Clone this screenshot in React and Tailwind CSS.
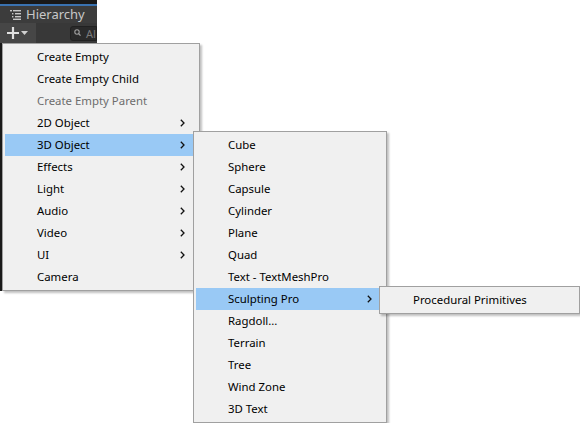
const menu1 = [
  { label: "Create Empty" },
  { label: "Create Empty Child" },
  { label: "Create Empty Parent", disabled: true },
  { label: "2D Object", sub: true },
  { label: "3D Object", sub: true, active: true },
  { label: "Effects", sub: true },
  { label: "Light", sub: true },
  { label: "Audio", sub: true },
  { label: "Video", sub: true },
  { label: "UI", sub: true },
  { label: "Camera" },
]

const menu2 = [
  { label: "Cube" },
  { label: "Sphere" },
  { label: "Capsule" },
  { label: "Cylinder" },
  { label: "Plane" },
  { label: "Quad" },
  { label: "Text - TextMeshPro" },
  { label: "Sculpting Pro", sub: true, active: true },
  { label: "Ragdoll..." },
  { label: "Terrain" },
  { label: "Tree" },
  { label: "Wind Zone" },
  { label: "3D Text" },
]

function Chevron() {
  return (
    <svg width="5" height="8" viewBox="0 0 5 8" className="shrink-0">
      <path d="M0.8 0.8 L4 4 L0.8 7.2" fill="none" stroke="#111" strokeWidth="1.3" />
    </svg>
  )
}

function Item({ label, sub, active, disabled }) {
  return (
    <div
      className={`flex h-[22px] items-center pl-8 pr-3 ${active ? "bg-[#99c9f5]" : ""} ${disabled ? "text-[#6d6d6d]" : "text-black"}`}
    >
      <span className="flex-1 whitespace-nowrap">{label}</span>
      {sub && <Chevron />}
    </div>
  )
}

function Menu({ items, className }) {
  return (
    <div
      className={`absolute border border-[#a0a0a0] bg-[#f0f0f0] p-[2px] shadow-[2px_2px_2px_rgba(0,0,0,0.25)] ${className}`}
    >
      {items.map((it) => (
        <Item key={it.label} {...it} />
      ))}
    </div>
  )
}

export default function App() {
  return (
    <div className="relative h-[423px] w-[580px] overflow-hidden bg-white text-[11.4px] font-['Noto_Sans','Open_Sans',sans-serif]">
      <div className="w-[97px] bg-[#282828]">
        <div className="h-[4px] bg-[#191919]" />
        <div className="h-[2px] bg-[#3a72b0]" />
        <div className="flex h-[17px] items-center gap-[5px] bg-[#3c3c3c] pl-[10px] text-[#c8c8c8]">
          <svg width="11" height="10" viewBox="0 0 11 10">
            <g fill="#c8c8c8">
              <rect x="0" y="0" width="2" height="1.4" />
              <rect x="3" y="0" width="8" height="1.4" />
              <rect x="2" y="3" width="1.4" height="1.4" />
              <rect x="5" y="3" width="6" height="1.4" />
              <rect x="2" y="6" width="1.4" height="1.4" />
              <rect x="5" y="6" width="6" height="1.4" />
              <rect x="3" y="8.6" width="8" height="1.4" />
            </g>
          </svg>
          <span className="text-[13px] leading-none">Hierarchy</span>
        </div>
        <div className="flex h-[20px] items-center bg-[#383838]">
          <div className="flex h-full w-[36px] items-center gap-[2px] bg-[#464646] pl-[7px]">
            <svg width="12" height="12" viewBox="0 0 12 12">
              <path d="M6 0 V12 M0 6 H12" stroke="#e0e0e0" strokeWidth="2.2" />
            </svg>
            <svg width="7" height="5" viewBox="0 0 7 5">
              <path d="M0 0 H7 L3.5 4 Z" fill="#d0d0d0" />
            </svg>
          </div>
          <div className="ml-[34px] flex h-[15px] flex-1 items-center gap-[3px] rounded-l-[3px] border border-[#212121] bg-[#2a2a2a] pl-[3px] text-[11px] text-[#7a7a7a]">
            <svg width="9" height="8" viewBox="0 0 9 8">
              <circle cx="3" cy="3" r="2.2" fill="none" stroke="#a0a0a0" strokeWidth="1.1" />
              <path d="M4.6 4.6 L6.5 6.6" stroke="#a0a0a0" strokeWidth="1.3" />
            </svg>
            <span className="leading-none">Al</span>
          </div>
        </div>
        <div className="h-[248px] w-[2px] bg-[#191919]" />
      </div>

      <Menu items={menu1} className="left-[2px] top-[43px] w-[198px]" />
      <Menu items={menu2} className="left-[193px] top-[131px] w-[194px]" />
      <div className="absolute left-[379px] top-[286px] w-[201px] border border-[#a0a0a0] bg-[#f0f0f0] p-[2px] shadow-[2px_2px_2px_rgba(0,0,0,0.25)]">
        <div className="flex h-[22px] items-center pl-[31px] text-black">Procedural Primitives</div>
      </div>
    </div>
  )
}
